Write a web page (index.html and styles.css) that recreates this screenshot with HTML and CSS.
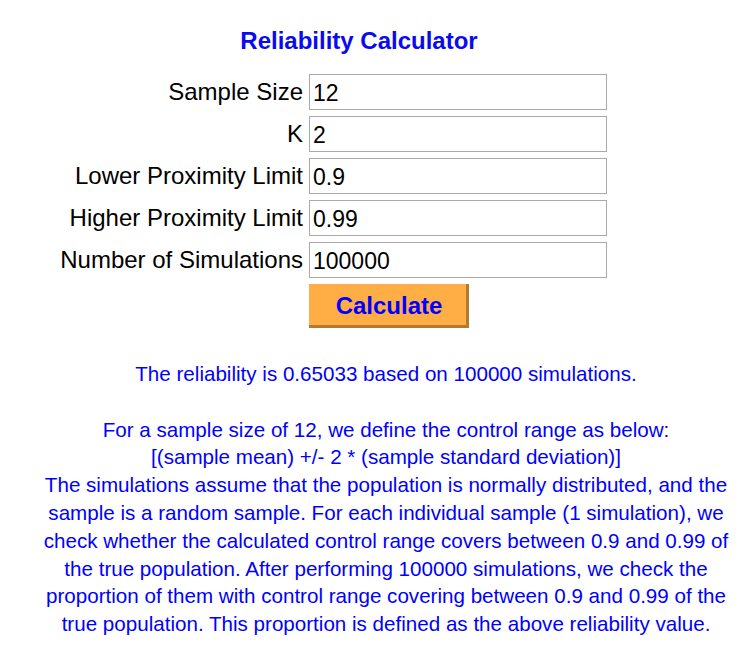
FILE: index.html
```html
<!DOCTYPE html>
<html>
<head>
<meta charset="utf-8">
<title>Reliability Calculator</title>
<link rel="stylesheet" href="styles.css">
</head>
<body>
<div class="page">
  <h1 class="title">Reliability Calculator</h1>
  <form class="calc-form">
    <label class="field-label" for="n">Sample Size</label>
    <input class="field-input" id="n" type="text" value="12">
    <label class="field-label" for="k">K</label>
    <input class="field-input" id="k" type="text" value="2">
    <label class="field-label" for="lo">Lower Proximity Limit</label>
    <input class="field-input" id="lo" type="text" value="0.9">
    <label class="field-label" for="hi">Higher Proximity Limit</label>
    <input class="field-input" id="hi" type="text" value="0.99">
    <label class="field-label" for="sims">Number of Simulations</label>
    <input class="field-input" id="sims" type="text" value="100000">
    <span class="spacer"></span>
    <div class="btn-cell"><button class="calc-btn" type="button">Calculate</button></div>
  </form>
  <div class="result">
    <p class="result-line">The reliability is 0.65033 based on 100000 simulations.</p>
    <p class="explain">For a sample size of 12, we define the control range as below:<br>[(sample mean) +/- 2 * (sample standard deviation)]<br>The simulations assume that the population is normally distributed, and the sample is a random sample. For each individual sample (1 simulation), we check whether the calculated control range covers between 0.9 and 0.99 of the true population. After performing 100000 simulations, we check the proportion of them with control range covering between 0.9 and 0.99 of the true population. This proportion is defined as the above reliability value.</p>
  </div>
</div>
</body>
</html>
```

FILE: styles.css
```css
html, body {
  margin: 0;
  padding: 0;
  background: #ffffff;
}

body {
  font-family: "Liberation Sans", Arial, sans-serif;
  color: #000000;
}

.page {
  padding: 27px 0 0 40px;
  width: 692px;
}

.title {
  margin: 0;
  width: 638px;
  text-align: center;
  font-size: 24px;
  line-height: 28px;
  font-weight: bold;
  color: #0a0af0;
}

.calc-form {
  margin: 19px 0 0 0;
  display: grid;
  grid-template-columns: 263px 298px;
  grid-template-rows: repeat(5, 36px) 44px;
  column-gap: 6px;
  row-gap: 6px;
}

.field-label {
  display: flex;
  align-items: center;
  justify-content: flex-end;
  font-size: 24px;
  line-height: 28px;
  color: #000000;
}

.field-input {
  box-sizing: border-box;
  width: 298px;
  height: 36px;
  margin: 0;
  padding: 3px 3px 0 3px;
  border: 1px solid #a9a9a9;
  font-family: "Liberation Sans", Arial, sans-serif;
  font-size: 23px;
  color: #000000;
  background: #ffffff;
  outline: none;
}

.btn-cell {
  height: 44px;
}

.calc-btn {
  box-sizing: border-box;
  width: 160px;
  height: 44px;
  margin: 0;
  padding: 2px 0 0 3px;
  border: none;
  border-right: 3px solid #b27a2f;
  border-bottom: 3px solid #b27a2f;
  background: #ffad45;
  color: #0000ff;
  font-family: "Liberation Sans", Arial, sans-serif;
  font-size: 24px;
  font-weight: bold;
  cursor: pointer;
}

.result {
  margin-top: 32px;
  text-align: center;
  color: #0000ff;
  font-size: 20.6px;
  line-height: 27.8px;
}

.result p {
  margin: 0;
}

.result-line {
  margin-bottom: 27.8px !important;
}
```
